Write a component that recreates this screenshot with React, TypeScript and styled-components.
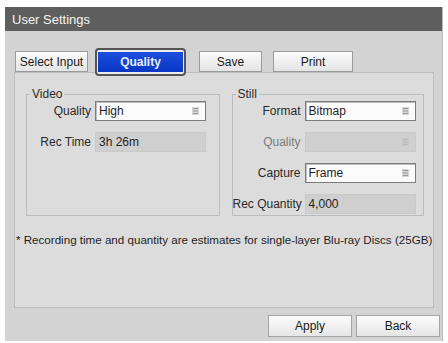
import React from "react";
import styled, { createGlobalStyle } from "styled-components";

const GlobalStyle = createGlobalStyle`
  body {
    margin: 0;
    background: #ffffff;
    font-family: "Liberation Sans", Arial, sans-serif;
  }
`;

const Window = styled.div`
  margin: 7px 0 0 5px;
  width: 438px;
  height: 334px;
  display: flex;
  flex-direction: column;
  background: #d3d3d3;
  border-right: 1px solid #b9b9b9;
  box-sizing: border-box;
`;

const TitleBar = styled.div`
  height: 24px;
  background: #5e5e5e;
  color: #f4f4f4;
  font-size: 13px;
  display: flex;
  align-items: center;
  padding-left: 7px;
`;

const Body = styled.div`
  flex: 1;
  display: flex;
  flex-direction: column;
  padding: 20px 0 0 9px;
`;

const TabRow = styled.div`
  display: flex;
  align-items: center;
  height: 21px;
  padding-left: 1px;
  position: relative;
  z-index: 1;
`;

const Tab = styled.button<{ $w: number; $ml?: number }>`
  width: ${(p) => p.$w}px;
  height: 21px;
  margin-left: ${(p) => p.$ml ?? 0}px;
  padding: 0;
  border: 1px solid #9a9a9a;
  background: linear-gradient(#fbfbfb, #e4e4e4);
  font-family: inherit;
  font-size: 12px;
  color: #1a1a1a;
`;

const FocusRing = styled.div`
  margin-left: 7px;
  width: 91px;
  height: 28px;
  box-sizing: border-box;
  border: 2px solid #555555;
  border-radius: 4px;
  background: #ececec;
  padding: 2px 1px;
  display: flex;
`;

const ActiveTab = styled.div`
  flex: 1;
  background: linear-gradient(#1c4fdc, #0835c4);
  color: #e8eeff;
  font-size: 12px;
  font-weight: bold;
  display: flex;
  align-items: center;
  justify-content: center;
`;

const Panel = styled.div`
  width: 420px;
  height: 236px;
  box-sizing: border-box;
  background: #dcdcdc;
  border: 1px solid #bdbdbd;
  padding: 15px 9px 0 11px;
  display: flex;
  flex-direction: column;
`;

const Groups = styled.div`
  display: flex;
  gap: 12px;
`;

const Group = styled.fieldset<{ $w: number; $label: number }>`
  margin: 0;
  width: ${(p) => p.$w}px;
  height: 128px;
  box-sizing: border-box;
  border: 1px solid #bcbcbc;
  padding: 1px 0 0 0;
  display: grid;
  grid-template-columns: ${(p) => p.$label}px 111px;
  column-gap: 4px;
  row-gap: 11px;
  align-content: start;

  legend {
    font-size: 12px;
    color: #2a2a2a;
    padding: 0 2px;
    margin-left: 3px;
    line-height: 12px;
  }
`;

const Label = styled.span<{ $dim?: boolean }>`
  font-size: 12px;
  color: ${(p) => (p.$dim ? "#7a7a7a" : "#2a2a2a")};
  text-align: right;
  align-self: center;
  white-space: nowrap;
`;

const Field = styled.div<{ $kind: "select" | "readonly" | "disabled" }>`
  height: 20px;
  box-sizing: border-box;
  display: flex;
  align-items: center;
  padding: 0 6px 0 3px;
  font-size: 12px;
  color: #1e1e1e;
  background: ${(p) => (p.$kind === "select" ? "#fbfbfb" : "#cfcfcf")};
  border: 1px solid
    ${(p) => (p.$kind === "select" ? "#7c7c7c" : "#cacaca")};
  box-shadow: ${(p) =>
    p.$kind === "select" ? "inset 1px 1px 0 #bdbdbd" : "none"};
`;

const FieldText = styled.span`
  flex: 1;
`;

const MenuIcon = ({ faint }: { faint?: boolean }) => (
  <svg width="7" height="8" viewBox="0 0 7 8">
    <rect
      x="0"
      y="0"
      width="7"
      height="8"
      fill={faint ? "#c8c8c8" : "#d4d4d4"}
    />
    {[1.5, 4, 6.5].map((y) => (
      <line
        key={y}
        x1="1"
        x2="6"
        y1={y}
        y2={y}
        stroke={faint ? "#bbbbbb" : "#9a9a9a"}
        strokeWidth="1"
      />
    ))}
  </svg>
);

const Note = styled.div`
  margin: 17px 0 0 -10px;
  font-size: 11.6px;
  color: #1e1e1e;
  white-space: nowrap;
`;

const Footer = styled.div`
  flex: 1;
  display: flex;
  justify-content: flex-end;
  align-items: flex-start;
  gap: 4px;
  padding: 7px 2px 0 0;
`;

const FooterButton = styled.button`
  width: 84px;
  height: 22px;
  padding: 0;
  border: 1px solid #a4a4a4;
  background: linear-gradient(#fbfbfb, #e6e6e6);
  font-family: inherit;
  font-size: 12px;
  color: #1a1a1a;
`;

const App = () => {
  return (
    <>
      <GlobalStyle />
      <Window>
        <TitleBar>User Settings</TitleBar>
        <Body>
          <TabRow>
            <Tab $w={73}>Select Input</Tab>
            <FocusRing>
              <ActiveTab>Quality</ActiveTab>
            </FocusRing>
            <Tab $w={63} $ml={13}>
              Save
            </Tab>
            <Tab $w={80} $ml={11}>
              Print
            </Tab>
          </TabRow>
          <Panel>
            <Groups>
              <Group $w={194} $label={64}>
                <legend>Video</legend>
                <Label>Quality</Label>
                <Field $kind="select">
                  <FieldText>High</FieldText>
                  <MenuIcon />
                </Field>
                <Label>Rec Time</Label>
                <Field $kind="readonly">
                  <FieldText>3h 26m</FieldText>
                </Field>
              </Group>
              <Group $w={193} $label={68}>
                <legend>Still</legend>
                <Label>Format</Label>
                <Field $kind="select">
                  <FieldText>Bitmap</FieldText>
                  <MenuIcon />
                </Field>
                <Label $dim>Quality</Label>
                <Field $kind="disabled">
                  <FieldText />
                  <MenuIcon faint />
                </Field>
                <Label>Capture</Label>
                <Field $kind="select">
                  <FieldText>Frame</FieldText>
                  <MenuIcon />
                </Field>
                <Label>Rec Quantity</Label>
                <Field $kind="readonly">
                  <FieldText>4,000</FieldText>
                </Field>
              </Group>
            </Groups>
            <Note>
              * Recording time and quantity are estimates for single-layer
              Blu-ray Discs (25GB)
            </Note>
          </Panel>
          <Footer>
            <FooterButton>Apply</FooterButton>
            <FooterButton>Back</FooterButton>
          </Footer>
        </Body>
      </Window>
    </>
  );
};

export default App;
